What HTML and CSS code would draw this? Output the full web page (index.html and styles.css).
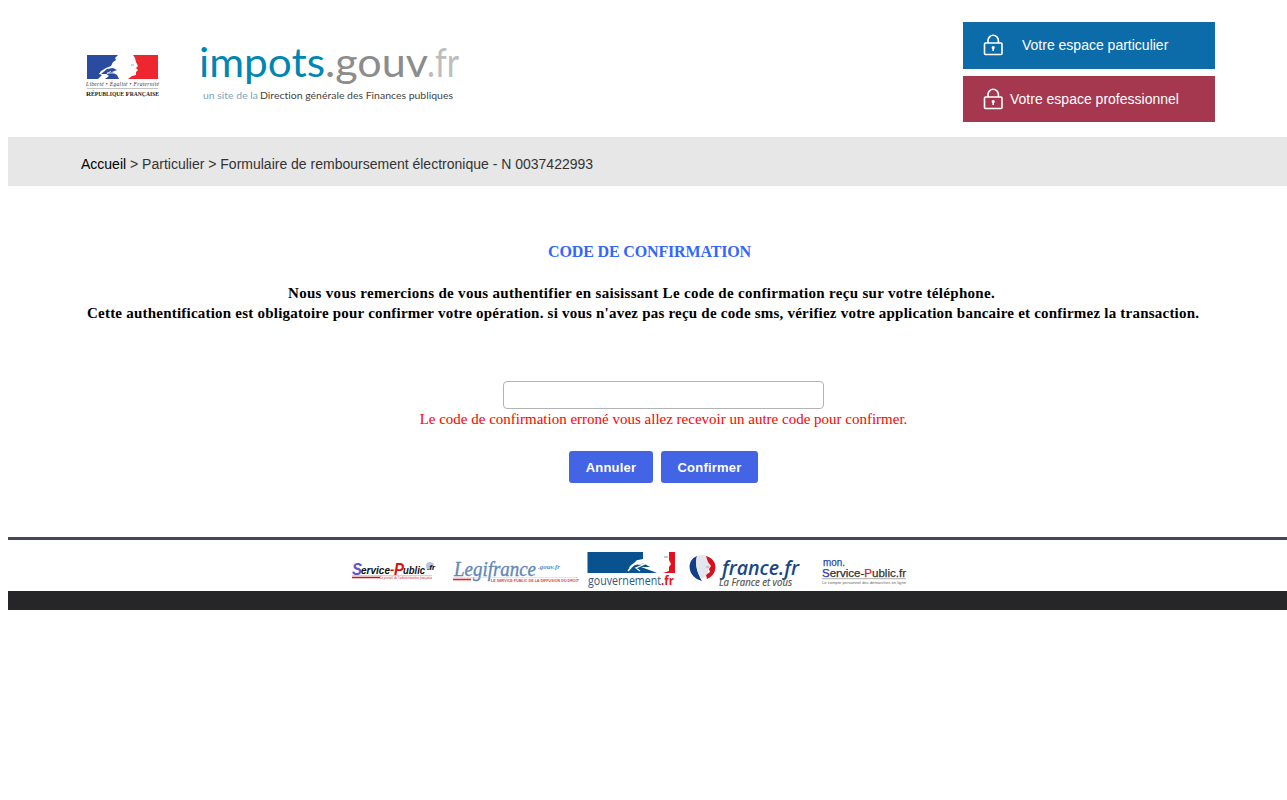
FILE: index.html
```html
<!DOCTYPE html>
<html lang="fr">
<head>
<meta charset="utf-8">
<title>Maquette statique</title>
<link rel="stylesheet" href="styles.css">
</head>
<body>
<header class="top">
  <div class="brand">
    <svg class="brand-art" width="390" height="82" viewBox="75 28 390 82">
      <path d="M87 55H118L115 58L116 60L113 62L111 66L106 68L101 71L99 74L102 75L98 79H87Z" fill="#2b4ba0"/>
      <path d="M101 74L107 69L113 68L117 70L112 72L117 75L119 79H105L109 76L106 74Z" fill="#2b4ba0"/>
      <path d="M103 77L111 71M107 73L115 73" stroke="#fff" stroke-width=".8"/>
      <path d="M133 55H158V79H128L132 76L136 75V72L138 70L136 68L138 66L136 62L135 58Z" fill="#ed2630"/>
      <path d="M131 65H134" stroke="#888" stroke-width=".7"/>
      <text class="motto" x="86" y="86.3" textLength="73">Liberté • Égalité • Fraternité</text>
      <path d="M87 88.5H158" stroke="#aaa" stroke-width=".7"/>
      <text class="rf" x="86" y="96" textLength="73" lengthAdjust="spacingAndGlyphs"><tspan font-size="7">R</tspan>ÉPUBLIQUE <tspan font-size="7">F</tspan>RANÇAISE</text>
      <g class="site">
        <text x="199" y="77" textLength="126" lengthAdjust="spacingAndGlyphs" fill="#0086b3">impots</text>
        <text x="325" y="77" textLength="103" lengthAdjust="spacingAndGlyphs" fill="#8c8c8c">.gouv</text>
        <text x="427" y="77" textLength="32" lengthAdjust="spacingAndGlyphs" fill="#bdbdbd">.fr</text>
      </g>
      <text class="tag" x="203" y="99" textLength="55" lengthAdjust="spacingAndGlyphs" fill="#7fa3bd">un site de la</text>
      <text class="tag" x="260" y="99" textLength="193" lengthAdjust="spacingAndGlyphs" fill="#444">Direction générale des Finances publiques</text>
    </svg>
  </div>
  <div class="spaces">
    <div class="space blue">
      <svg class="lock" width="20" height="22" viewBox="0 0 20 22"><rect x="1.500" y="9" width="17.500" height="11.500" rx="1"/><path d="M5 9V6.500a5.200 5.200 0 0 1 10.400 0V9"/><circle cx="10.200" cy="13.500" r=".8"/><path d="M10.200 14v3"/></svg>
      <span class="wide">Votre espace particulier</span>
    </div>
    <div class="space red">
      <svg class="lock" width="20" height="22" viewBox="0 0 20 22"><rect x="1.500" y="9" width="17.500" height="11.500" rx="1"/><path d="M5 9V6.500a5.200 5.200 0 0 1 10.400 0V9"/><circle cx="10.200" cy="13.500" r=".8"/><path d="M10.200 14v3"/></svg>
      <span>Votre espace professionnel</span>
    </div>
  </div>
</header>
<div class="crumbs"><span class="home">Accueil</span> &gt; Particulier &gt; Formulaire de remboursement électronique - N 0037422993</div>
<main class="content">
  <div class="title">CODE DE CONFIRMATION</div>
  <div class="intro"><span class="line one">Nous vous remercions de vous authentifier en saisissant Le code de confirmation reçu sur votre téléphone.</span><span class="line two">Cette authentification est obligatoire pour confirmer votre opération. si vous n'avez pas reçu de code sms, vérifiez votre application bancaire et confirmez la transaction.</span></div>
  <div class="panel">
    <div class="field"></div>
    <div class="error">Le code de confirmation erroné vous allez recevoir un autre code pour confirmer.</div>
    <div class="actions"><span class="btn cancel">Annuler</span><span class="btn confirm">Confirmer</span></div>
  </div>
</main>
<footer class="foot">
  <svg class="partners" width="570" height="51" viewBox="345 540 570 51">
    <g font-family="Liberation Sans" font-weight="bold" font-style="italic" fill="#111">
      <text x="352" y="575" font-size="17" fill="#5a55cc" textLength="10" lengthAdjust="spacingAndGlyphs">S</text>
      <text x="361" y="574" font-size="10.500" textLength="29" lengthAdjust="spacingAndGlyphs">ervice</text>
      <text x="390" y="574" font-size="13" fill="#d11">-</text>
      <text x="394" y="575" font-size="17" fill="#d11" textLength="10" lengthAdjust="spacingAndGlyphs">P</text>
      <text x="403" y="574" font-size="10.500" textLength="22" lengthAdjust="spacingAndGlyphs">ublic</text>
      <circle cx="430" cy="566" r="4" fill="#b9c7de"/>
      <text x="427" y="570" font-size="8">.fr</text>
      <path d="M352 577.5H380" stroke="#c11" stroke-width="1.5"/><path d="M352 575.7H432" stroke="#c55" stroke-width=".4"/>
      <text x="380" y="579" font-family="Liberation Serif" font-size="3.800" font-weight="normal" fill="#c11" textLength="52" lengthAdjust="spacingAndGlyphs">Le portail de l'administration française</text>
    </g>
    <g font-family="Liberation Serif" font-style="italic" fill="#5f88b5" stroke="#5f88b5" stroke-width=".35">
      <text x="454" y="576" font-size="21" textLength="82" lengthAdjust="spacingAndGlyphs">Legifrance</text>
      <text x="538" y="569" font-size="7" stroke="none" textLength="22" font-weight="bold" lengthAdjust="spacingAndGlyphs">.gouv.fr</text>
    </g>
    <path d="M453 579.5H471" stroke="#d22" stroke-width="1.6"/><path d="M453 577.5H578" stroke="#bbb" stroke-width=".4"/>
    <text x="491" y="581.5" font-family="Liberation Sans" font-weight="bold" font-size="3.5" fill="#d44" textLength="88" lengthAdjust="spacingAndGlyphs">LE SERVICE PUBLIC DE LA DIFFUSION DU DROIT</text>
    <path d="M587.500 552H643V559L638 560L630 566L627 573H587.500Z" fill="#07528f"/>
    <path d="M625 573L632 566L643 563L650 567L641 567L652 571L657 573Z" fill="#07528f"/>
    <path d="M628 571L637 561L642 561L639 564L645 564L636 568L640 571" fill="none" stroke="#fff" stroke-width="1.3"/>
    <path d="M669 552H675V573H663L669 571V567L671 564L669 560Z" fill="#e5101b"/><path d="M664 557h4" stroke="#777" stroke-width=".8"/>
    <g font-family="Open Sans" font-size="13"><text x="588" y="585" fill="#31587e" textLength="73" lengthAdjust="spacingAndGlyphs">gouvernement</text><text x="661" y="585" fill="#e11" font-weight="bold" textLength="13" lengthAdjust="spacingAndGlyphs">.fr</text></g>
    <path d="M697 556C686 560 687 577 702 581C697 573 695 563 697 556Z" fill="#123f87"/>
    <path d="M697 556C706 553 709 557 709 562L711 567L708 570V575L702 579C696 572 695 563 697 556Z" fill="#e3e6ed"/>
    <path d="M706 556C718 559 719 574 707 579L706 575L710 572L709 569L711 566L708 562Z" fill="#d5111d"/>
    <path d="M706 567h3" stroke="#888" stroke-width=".7"/>
    <text x="722" y="575" font-family="Open Sans" font-weight="600" font-style="italic" font-size="20" fill="#17468c" textLength="77" lengthAdjust="spacingAndGlyphs">france.fr</text>
    <text x="719" y="586" font-family="Open Sans" font-style="italic" font-size="10" fill="#555" stroke="#555" stroke-width=".2" textLength="73" lengthAdjust="spacingAndGlyphs">La France et vous</text>
    <g font-family="Liberation Sans" font-size="10" fill="#333" stroke-width=".25">
      <text x="823" y="566" fill="#2c4aa8" stroke="#2c4aa8" textLength="22" lengthAdjust="spacingAndGlyphs">mon.</text>
      <text x="822" y="577" font-size="11" stroke="#333" textLength="84" lengthAdjust="spacingAndGlyphs"><tspan fill="#2438c0" stroke="#2438c0">S</tspan>ervice-<tspan fill="#e11" stroke="#e11">P</tspan>ublic.fr</text>
      <path d="M822 578.700H906" stroke="#777" stroke-width=".6"/>
      <text x="822" y="583.500" font-size="4.300" fill="#666" textLength="84" lengthAdjust="spacingAndGlyphs">Le compte personnel des démarches en ligne</text>
    </g>
  </svg>
</footer>
</body>
</html>
```
FILE: styles.css
```css
* { box-sizing: border-box; }
body { margin: 0 0 0 8px; background: #fff; font-family: "Liberation Serif", serif; overflow-x: hidden; }
svg { display: block; }
.top { height: 137px; display: flex; justify-content: space-between; padding: 22px 72px 0 67px; }
.brand { padding-top: 6px; }
.motto { font: italic 5.5px "Liberation Serif", serif; fill: #333; }
.rf { font: bold 5.600px "Liberation Serif", serif; fill: #222; }
.site { font: 400 40px Lato, sans-serif; }
.tag { font: 10px Lato, sans-serif; font-variant-ligatures: none; }
.spaces { display: flex; flex-direction: column; gap: 7px; width: 252px; }
.space { display: flex; align-items: center; height: 47px; padding-left: 20px; color: #fff; font: 14px "Liberation Sans", sans-serif; white-space: nowrap; }
.space span { padding-left: 7px; }
.space .wide { padding-left: 19px; }
.blue { background: #0c6ba9; padding-bottom: 1px; }
.red { background: #a5384f; height: 46px; }
.lock { fill: none; stroke: #fff; stroke-width: 1.6; }
.crumbs { height: 49px; background: #e7e7e7; padding: 5px 0 0 73px; font: 14px/44px "Liberation Sans", sans-serif; color: #333; white-space: nowrap; }
.home { color: #000; }
.content { height: 351px; padding-top: 56px; }
.title { width: 1283px; text-align: center; font-weight: bold; font-size: 16px; line-height: 20px; letter-spacing: -.15px; color: #3366ff; }
.intro { padding-top: 21px; font-weight: bold; font-size: 15px; line-height: 20px; white-space: nowrap; }
.line { display: block; }
.one { padding-left: 280px; letter-spacing: .305px; }
.two { padding-left: 79px; letter-spacing: .219px; }
.panel { width: 1311px; padding-top: 58px; display: flex; flex-direction: column; align-items: center; }
.field { width: 321px; height: 28px; border: 1px solid #b3b3b3; border-radius: 4px; background: #fff; }
.error { color: #f00; font-size: 15px; line-height: 20px; white-space: nowrap; }
.actions { display: flex; gap: 8px; padding-top: 22px; }
.btn { height: 32px; border-radius: 3px; background: #4464e6; color: #fff; font: bold 13px/33px "Liberation Sans", sans-serif; letter-spacing: .2px; text-align: center; }
.cancel { width: 84px; }
.confirm { width: 97px; }
.foot { border-top: 3px solid #434959; border-bottom: 19px solid #262628; padding-left: 337px; }
```
